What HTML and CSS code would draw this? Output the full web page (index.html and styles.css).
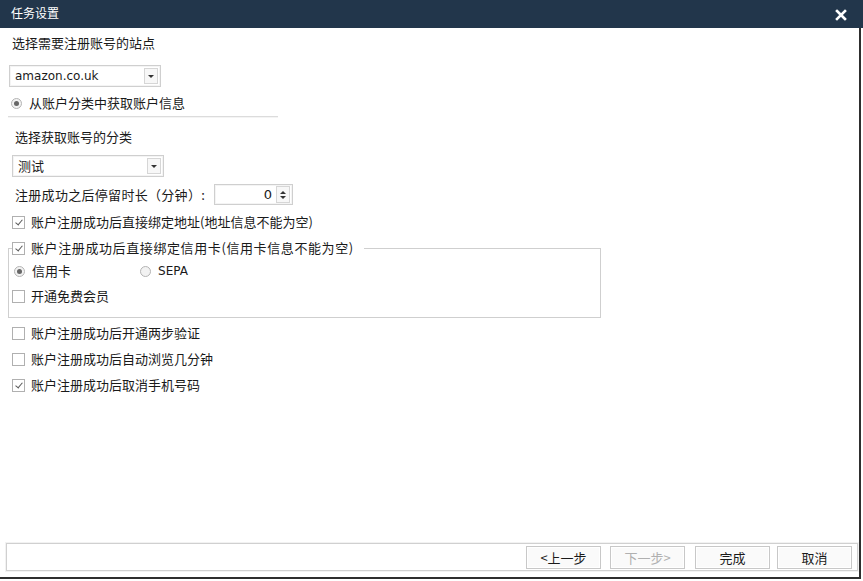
FILE: index.html
```html
<!DOCTYPE html>
<html lang="zh-CN">
<head>
  <meta charset="UTF-8">
  <title>任务设置</title>
  <link rel="stylesheet" href="styles.css">
</head>
<body>

  <div class="title-bar">
    <span class="title">任务设置</span>
    <svg class="close" width="12" height="12" viewBox="0 0 12 12">
      <path d="M2 2 L10 10 M10 2 L2 10" stroke="#fff" stroke-width="2.6" stroke-linecap="square"/>
    </svg>
  </div>

  <div class="dialog">
    <div class="row label-site">选择需要注册账号的站点</div>

    <div class="combo combo-site">
      <span class="combo-text latin">amazon.co.uk</span>
      <span class="combo-btn"><i class="arrow"></i></span>
    </div>

    <div class="row opt-row radio-source">
      <span class="radio checked"></span>
      <span>从账户分类中获取账户信息</span>
    </div>

    <div class="separator"></div>

    <div class="row label-cat">选择获取账号的分类</div>

    <div class="combo combo-cat">
      <span class="combo-text">测试</span>
      <span class="combo-btn"><i class="arrow"></i></span>
    </div>

    <div class="row stay-row">
      <span class="stay-label">注册成功之后停留时长（分钟）:</span>
      <div class="spin">
        <span class="spin-value latin">0</span>
        <span class="spin-btns">
          <i class="arrow up"></i>
          <i class="arrow"></i>
        </span>
      </div>
    </div>

    <div class="row opt-row check-address">
      <span class="check checked"></span>
      <span>账户注册成功后直接绑定地址(地址信息不能为空)</span>
    </div>

    <fieldset class="group">
      <legend class="opt-row">
        <span class="check checked"></span>
        <span class="legend-text">账户注册成功后直接绑定信用卡(信用卡信息不能为空)</span>
      </legend>
      <div class="row opt-row card-types">
        <span class="opt"><span class="radio checked"></span>信用卡</span>
        <span class="opt sepa"><span class="radio"></span><span class="latin">SEPA</span></span>
      </div>
      <div class="row opt-row free-member">
        <span class="check"></span>
        <span>开通免费会员</span>
      </div>
    </fieldset>

    <div class="row opt-row check-list first">
      <span class="check"></span>
      <span>账户注册成功后开通两步验证</span>
    </div>
    <div class="row opt-row check-list">
      <span class="check"></span>
      <span>账户注册成功后自动浏览几分钟</span>
    </div>
    <div class="row opt-row check-list">
      <span class="check checked"></span>
      <span>账户注册成功后取消手机号码</span>
    </div>

    <div class="footer">
      <button class="btn btn-prev">&lt;上一步</button>
      <button class="btn btn-next" disabled>下一步&gt;</button>
      <button class="btn btn-done">完成</button>
      <button class="btn btn-cancel">取消</button>
    </div>
  </div>

</body>
</html>
```

FILE: styles.css
```css
/* General Reset */
* {
  margin: 0;
  padding: 0;
  box-sizing: border-box;
}

html {
  background: #fff;
}

body {
  width: 863px;
  height: 581px;
  font-family: 'Noto Sans CJK SC', 'DejaVu Sans', sans-serif;
  font-size: 13px;
  color: #1a1a1a;
  background: #fff;
  overflow: hidden;
}

.latin {
  font-family: 'DejaVu Sans', 'Noto Sans CJK SC', sans-serif;
  font-size: 12px;
}

/* Title bar */
.title-bar {
  height: 28px;
  background-color: #22364b;
  color: #fff;
  display: flex;
  align-items: center;
  justify-content: space-between;
  padding: 0 16px 0 11px;
}

.title-bar .title {
  font-size: 12px;
  line-height: 16px;
  margin-top: -3px;
}

.title-bar .close {
  margin-top: 2px;
}

/* Dialog body */
.dialog {
  width: 861px;
  height: 551px;
  border-right: 2px solid #2e2e2e;
  border-bottom: 2px solid #2e2e2e;
  display: flex;
  flex-direction: column;
  align-items: flex-start;
}

.row {
  height: 16px;
  line-height: 16px;
  white-space: nowrap;
}

.opt-row {
  display: flex;
  align-items: center;
}

.label-site {
  margin: 7px 0 0 12px;
}

/* Combo boxes */
.combo {
  width: 152px;
  height: 22px;
  border: 1px solid #cfcfcf;
  background: #fff;
  display: flex;
  align-items: center;
  padding: 2px;
  box-shadow: inset 0 0 0 1px #f4f4f4;
}

.combo-text {
  flex: 1;
  padding-left: 3px;
  line-height: 16px;
}

.combo-btn {
  width: 14px;
  height: 16px;
  border: 1px solid #d6d6d6;
  background: #f7f7f7;
  display: flex;
  align-items: center;
  justify-content: center;
}

.arrow {
  display: block;
  width: 0;
  height: 0;
  border-left: 3px solid transparent;
  border-right: 3px solid transparent;
  border-top: 3px solid #333;
}

.arrow.up {
  border-top: none;
  border-bottom: 3px solid #333;
  margin-bottom: 2px;
}

.combo-site {
  margin: 14px 0 0 9px;
}

.combo-cat {
  margin: 10px 0 0 12px;
}

/* Radios and checks */
.radio {
  width: 11px;
  height: 11px;
  border-radius: 50%;
  border: 1px solid #b4b4b4;
  background: #f2f2f2;
  margin-right: 7px;
  display: flex;
  align-items: center;
  justify-content: center;
  flex-shrink: 0;
}

.radio.checked::after {
  content: "";
  width: 5px;
  height: 5px;
  border-radius: 50%;
  background: #666;
}

.check {
  width: 13px;
  height: 13px;
  border: 1px solid #b0b0b0;
  background: #fff;
  margin-right: 6px;
  flex-shrink: 0;
  position: relative;
}

.check.checked::after {
  content: "";
  position: absolute;
  left: 4px;
  top: 1px;
  width: 3px;
  height: 6px;
  border-right: 1.5px solid #5a5a5a;
  border-bottom: 1.5px solid #5a5a5a;
  transform: rotate(40deg);
}

.radio-source {
  margin: 8px 0 0 11px;
}

.separator {
  width: 270px;
  height: 2px;
  margin: 5px 0 0 8px;
  border-top: 1px solid #dcdcdc;
  border-bottom: 1px solid #f4f4f4;
}

.label-cat {
  margin: 11px 0 0 15px;
}

/* Stay time spin */
.stay-row {
  height: 21px;
  margin: 7px 0 0 15px;
  display: flex;
  align-items: center;
}

.stay-label {
  width: 199px;
  letter-spacing: 0.3px;
}

.spin {
  width: 79px;
  height: 21px;
  border: 1px solid #cfcfcf;
  display: flex;
  align-items: center;
  box-shadow: inset 0 0 0 1px #f4f4f4;
}

.spin-value {
  flex: 1;
  text-align: right;
  padding-right: 4px;
  font-size: 13px;
}

.spin-btns {
  width: 14px;
  height: 17px;
  margin-right: 2px;
  border: 1px solid #d6d6d6;
  background: #f7f7f7;
  display: flex;
  flex-direction: column;
  align-items: center;
  justify-content: center;
}

.check-address {
  margin: 9px 0 0 12px;
}

/* Credit card group */
.group {
  width: 593px;
  margin: 10px 0 0 8px;
  border: 1px solid #cfcfcf;
  padding: 0 0 13px 0;
  min-width: 0;
}

.group legend {
  height: 16px;
  line-height: 16px;
  margin-left: 3px;
  padding-right: 10px;
  white-space: nowrap;
}

.legend-text {
  letter-spacing: 0.6px;
}

.card-types {
  margin: 7px 0 0 5px;
}

.opt {
  display: flex;
  align-items: center;
}

.sepa {
  margin-left: 69px;
}

.free-member {
  margin: 9px 0 0 3px;
}

.check-list {
  margin: 10px 0 0 12px;
}

.check-list.first {
  margin-top: 7px;
}

/* Footer */
.footer {
  margin: auto 0 6px 6px;
  width: 852px;
  height: 28px;
  border: 1px solid #d0d0d0;
  box-shadow: 0 0 0 1px #f2f2f2;
  display: flex;
  align-items: center;
  justify-content: flex-end;
  padding-right: 5px;
}

.btn {
  width: 75px;
  height: 23px;
  font-family: 'Noto Sans CJK SC', sans-serif;
  font-size: 13px;
  color: #1a1a1a;
  background: #fafafa;
  border: 1px solid #c8c8c8;
  box-shadow: inset 0 0 0 1px #fff;
  line-height: 19px;
}

.btn-prev {
  margin-right: 9px;
}

.btn-next {
  margin-right: 10px;
  color: #b0b0b0;
}

.btn-done {
  margin-right: 7px;
}
```
